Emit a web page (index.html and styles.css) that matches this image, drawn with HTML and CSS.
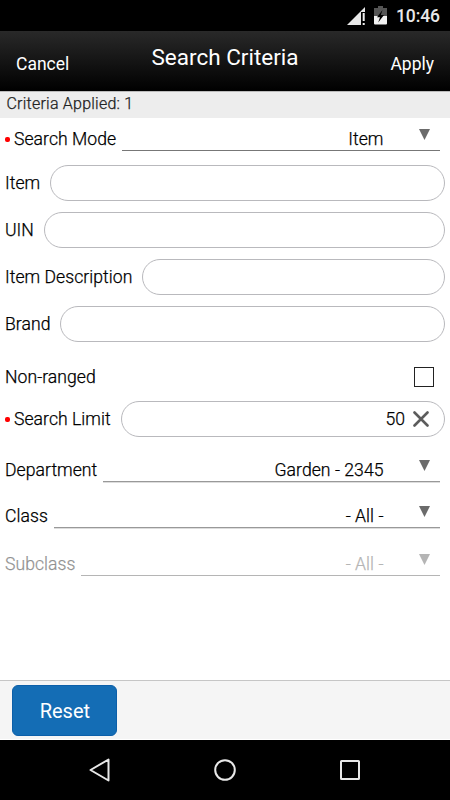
FILE: index.html
```html
<!DOCTYPE html>
<html lang="en">
<head>
<meta charset="utf-8">
<title>Search Criteria</title>
<link rel="stylesheet" href="styles.css">
</head>
<body>
<div class="status">
  <svg class="signal" width="20" height="20" viewBox="0 0 20 20"><path d="M0 18 18 0v5h-4v13z" fill="#e8e8e8"/><path d="M15.7 6h2v8h-2zM15.7 16h2v2h-2z" fill="#eee"/></svg>
  <svg class="battery" width="13" height="19" viewBox="0 0 13 19"><path d="M4 0h5v2h4v8H0V2h4z" fill="#555"/><path d="M0 10h13v7.5a1 1 0 0 1-1 1H1a1 1 0 0 1-1-1z" fill="#f2f2f2"/><path d="M8.5 4 3 11.2h3L4.2 16.5 10 9H6.8z" fill="#000"/></svg>
  <span class="clock">10:46</span>
</div>
<header class="bar">
  <span class="action cancel">Cancel</span>
  <h1 class="title">Search Criteria</h1>
  <span class="action apply">Apply</span>
</header>
<div class="applied">Criteria Applied: 1</div>
<main class="form">
  <div class="row select mode">
    <span class="label"><i class="dot"></i>Search Mode</span>
    <div class="choice"><span>Item</span><i class="arrow"></i></div>
  </div>
  <div class="row"><span class="label">Item</span><div class="field"></div></div>
  <div class="row uin"><span class="label">UIN</span><div class="field"></div></div>
  <div class="row desc"><span class="label">Item Description</span><div class="field"></div></div>
  <div class="row brand"><span class="label">Brand</span><div class="field"></div></div>
  <div class="row ranged"><span class="label">Non-ranged</span><span class="check"></span></div>
  <div class="row limit">
    <span class="label"><i class="dot"></i>Search Limit</span>
    <div class="field"><span>50</span><svg width="16" height="16" viewBox="0 0 16 16"><path d="M1.5 1.5l13 13M14.5 1.5l-13 13" stroke="#5c5c5c" stroke-width="2.6" stroke-linecap="round"/></svg></div>
  </div>
  <div class="row select dept">
    <span class="label">Department</span>
    <div class="choice"><span>Garden - 2345</span><i class="arrow"></i></div>
  </div>
  <div class="row select class">
    <span class="label">Class</span>
    <div class="choice"><span>- All -</span><i class="arrow"></i></div>
  </div>
  <div class="row select subclass">
    <span class="label">Subclass</span>
    <div class="choice"><span>- All -</span><i class="arrow"></i></div>
  </div>
</main>
<footer class="tools"><span class="reset">Reset</span></footer>
<nav class="nav">
  <svg width="24" height="26" viewBox="0 0 24 26"><path d="M2.5 13 20.5 2.5v21z"/></svg>
  <svg width="24" height="26" viewBox="0 0 24 26"><circle cx="12" cy="13" r="9.8"/></svg>
  <svg width="24" height="26" viewBox="0 0 24 26"><rect x="3" y="4" width="18" height="18" rx=".5"/></svg>
</nav>
</body>
</html>
```
FILE: styles.css
```css
* { box-sizing: border-box; }
body {
  margin: 0;
  width: 450px;
  height: 800px;
  display: flex;
  flex-direction: column;
  overflow: hidden;
  background: #fff;
  color: #111;
  font-family: Roboto, sans-serif;
}
svg { display: block; flex: none; }
.status {
  height: 31px;
  background: #000;
  display: flex;
  justify-content: flex-end;
  padding: 6px 10px 0 0;
}
.signal { margin: 1px 7px 0 0; }
.battery { margin-right: 9px; }
.clock { color: #e8e8e8; font-size: 17.5px; line-height: 21px; font-weight: 500; width: 44px; white-space: nowrap; letter-spacing: -.1px; }
.bar {
  height: 60px;
  background: linear-gradient(#292929, #000);
  color: #fff;
  display: grid;
  grid-template-columns: 1fr auto 1fr;
  padding: 0 16px;
}
.title { margin: 13px 0 0; font-size: 22.5px; line-height: 26px; font-weight: 400; }
.action { margin-top: 22px; font-size: 17.5px; line-height: 22px; }
.apply { text-align: right; }
.applied {
  height: 27px;
  background: #ededed;
  border-top: 1px solid #bbb;
  padding-left: 6.5px;
  font-size: 16px;
  font-weight: 300;
  -webkit-text-stroke: .25px;
  line-height: 23px;
  letter-spacing: .23px;
  color: #222;
}
.form { flex: 1; font-size: 17.6px; font-weight: 300; -webkit-text-stroke: .25px; letter-spacing: .04px; color: #000; }
.row { height: 36px; display: flex; padding: 0 5px; margin-bottom: 11px; }
.label { line-height: 36px; white-space: nowrap; margin-right: 10px; display: flex; align-items: center; }
.dot { width: 5px; height: 5px; border-radius: 2px; background: #f00; margin-right: 4px; }
.field {
  flex: 1;
  border: 1px solid #b9b9bd;
  border-radius: 18px;
  display: flex;
  justify-content: flex-end;
  align-items: center;
  gap: 8px;
  padding-right: 15px;
}
.select { height: 33px; }
.select .label { line-height: 42px; height: 42px; margin-right: 6px; }
.choice {
  flex: 1;
  border-bottom: 1px solid #777;
  margin-right: 5px;
  display: flex;
  justify-content: flex-end;
  line-height: 42px;
}
.arrow {
  width: 11px;
  height: 11px;
  margin: 11px 10px 0 35.5px;
  background: #6b6b6b;
  clip-path: polygon(0 0, 100% 0, 50% 100%);
}
.mode { margin-bottom: 14px; }
.brand { margin-bottom: 17px; }
.ranged { margin-bottom: 6px; justify-content: space-between; align-items: center; }
.ranged .label { line-height: 35px; }
.check { width: 20px; height: 20px; border: 1px solid #222; margin-right: 11px; }
.limit { margin-bottom: 12px; }
.dept { margin-bottom: 13px; }
.class { margin-bottom: 15px; }
.dept .choice, .class .choice { box-shadow: 0 1px #ddd; border-color: #999; }
.subclass .label { opacity: .43; }
.subclass .choice { color: #b5b5b5; border-color: #b5b5b5; }
.subclass .arrow { background: #b5b5b5; }
.tools {
  height: 60px;
  background: #f5f5f5;
  border-top: 1px solid #c6c6c6;
  border-bottom: 1px solid #fff;
  padding: 4px 12px;
}
.reset {
  display: block;
  width: 105px;
  height: 51px;
  border: 1px solid #0c5fa9;
  margin-left: .4px;
  border-radius: 6px;
  background: #146db5;
  color: #fff;
  font-size: 20px;
  line-height: 50px;
  text-align: center;
}
.nav {
  height: 60px;
  background: #000;
  display: flex;
  align-items: center;
  justify-content: center;
  gap: 101px;
}
.nav path, .nav circle, .nav rect { fill: none; stroke: #e8e8e8; stroke-width: 2; stroke-linejoin: round; }
```
